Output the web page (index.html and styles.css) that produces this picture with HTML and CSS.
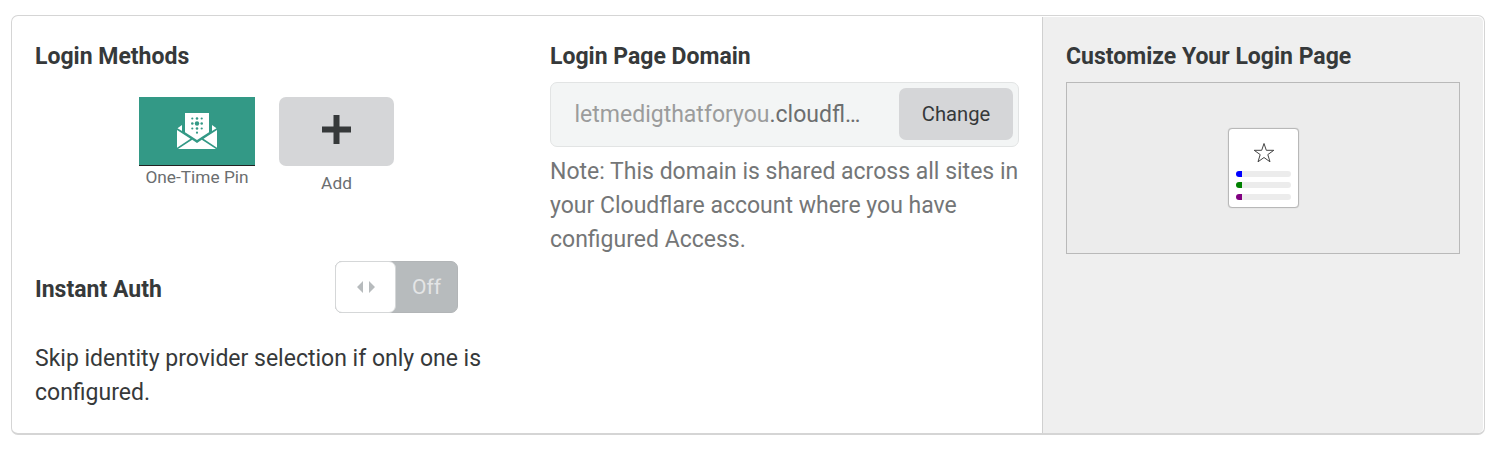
FILE: index.html
```html
<!DOCTYPE html>
<html lang="en">
<head>
<meta charset="utf-8">
<title>Login Methods</title>
<link rel="stylesheet" href="styles.css">
</head>
<body>
<main class="card">
  <section class="methods">
    <h2 class="title">Login Methods</h2>
    <div class="tiles">
      <div class="tile">
        <div class="pin">
          <svg width="40" height="36" viewBox="0 0 40 36" fill="#fff">
            <path d="M8 0h24v19.300L20 27 8 19.300z"/>
            <path d="M5 12v6L.5 15.200zM35 12v6l4.500-2.800z"/>
            <path d="M0 17 13.500 25.800 0 34.800zM40 17 26.500 25.800 40 34.800z"/>
            <path d="M1 36 15.200 26.800 20 29.900 24.800 26.800 39 36z"/>
            <g fill="#339986">
              <circle cx="15.300" cy="5.500" r="1.100"/><circle cx="20" cy="5.500" r="1.300"/><circle cx="24.700" cy="5.500" r="1.100"/>
              <circle cx="15.300" cy="10.500" r="1.300"/><circle cx="20" cy="10.500" r="2.200"/><circle cx="24.700" cy="10.500" r="1.300"/>
              <circle cx="15.300" cy="15.500" r="1.100"/><circle cx="20" cy="15.500" r="1.300"/><circle cx="24.700" cy="15.500" r="1.100"/>
              <circle cx="20" cy="19.700" r="1.100"/>
            </g>
          </svg>
        </div>
        <span class="label">One-Time Pin</span>
      </div>
      <div class="tile">
        <div class="add">
          <svg width="29" height="29" viewBox="0 0 29 29"><path fill="#36393a" d="M11.500 0h6v11.500H29v6H17.500V29h-6V17.500H0v-6h11.500z"/></svg>
        </div>
        <span class="label label-add">Add</span>
      </div>
    </div>
    <div class="instant">
      <h2 class="title">Instant Auth</h2>
      <div class="toggle">
        <div class="knob">
          <svg width="18" height="12" viewBox="0 0 18 12" fill="#b7bbbd"><path d="M6 0v12L0 6zM12 0v12l6-6z"/></svg>
        </div>
        <span class="state">Off</span>
      </div>
    </div>
    <p class="hint">Skip identity provider selection if only one is configured.</p>
  </section>
  <section class="domain">
    <h2 class="title">Login Page Domain</h2>
    <div class="field">
      <div class="value"><span class="sub">letmedigthatforyou</span><span class="host">.cloudfl…</span></div>
      <button class="change">Change</button>
    </div>
    <p class="note">Note: This domain is shared across all sites in your Cloudflare account where you have configured Access.</p>
  </section>
  <section class="customize">
    <h2 class="title">Customize Your Login Page</h2>
    <div class="preview">
      <div class="mini">
        <svg class="star" width="22" height="22" viewBox="0 0 22 22" fill="none" stroke="#444" stroke-width="1"><path d="M11 1.500 13.300 8.300H20.800L14.800 12.600 17 19.800 11 15.500 5 19.800 7.200 12.600 1.200 8.300H8.700z"/></svg>
        <div class="bar blue"></div>
        <div class="bar green"></div>
        <div class="bar purple"></div>
      </div>
    </div>
  </section>
</main>
</body>
</html>
```
FILE: styles.css
```css
* { box-sizing: border-box; }
body {
  margin: 0;
  padding: 15px 17px 0 11px;
  background: #fff;
  color: #36393a;
  font: 23px/34px Roboto, sans-serif;
}
.card {
  display: grid;
  grid-template-columns: 514px 516px 1fr;
  width: 1474px;
  height: 420px;
  border: 1px solid #d5d5d5;
  border-bottom-width: 2px;
  border-radius: 7px;
  padding: 1px 1px 0 0;
}
.title { margin: 0; font-size: 23px; line-height: 34px; font-weight: 700; white-space: nowrap; }
.methods { padding: 23px 23px 0; }
.tiles { display: flex; gap: 24px; height: 154px; padding: 23px 0 0 104px; }
.tile { display: flex; flex-direction: column; align-items: center; }
.pin {
  width: 116px; height: 69px; padding: 16px 38px;
  background: #339986; border-bottom: 1px solid #222;
}
.pin svg, .add svg, .knob svg { display: block; }
.add {
  display: flex; justify-content: center;
  width: 115px; height: 69px; padding-top: 17.500px;
  border-radius: 7px; background: #d5d6d8;
}
.label { font-size: 17.300px; line-height: 22px; color: #6b6e70; white-space: nowrap; }
.label-add { margin-top: 6px; }
.instant { display: flex; height: 86px; padding-top: 33px; }
.instant .title { width: 300px; padding-top: 12px; }
.toggle {
  display: flex; width: 123px; height: 52px;
  flex: none; border-radius: 7px; background: #b7bbbd; border: 1px solid #b2b5b7;
}
.knob {
  display: flex; align-items: center; justify-content: center;
  width: 61px; height: 52px; margin: -1px 0 0 -1px;
  border: 1px solid #d5d7d8; border-radius: 7px; background: #fff;
}
.state { flex: 1; text-align: center; font-size: 21px; line-height: 50px; color: #e4e5e6; }
.hint { margin: 28px 0 0; width: 460px; }
.domain { padding: 23px 23px 0 24px; }
.field {
  display: flex; justify-content: space-between;
  width: 469px; height: 65px; margin-top: 8px; padding: 5px 5px 5px 23.500px;
  border: 1px solid #e2e4e4; border-radius: 7px; background: #f3f5f5;
}
.value { line-height: 54px; white-space: nowrap; }
.sub { color: #9b9c9c; }
.host { color: #6c6e6f; }
.change {
  width: 114px; height: 52px; padding: 0; border: 0; border-radius: 7px;
  background: #d5d6d8; color: #36393a; font: 20.200px/52px Roboto, sans-serif;
}
.note { margin: 8px 0 0; width: 475px; color: #747677; }
.customize {
  padding: 23px 23px 0; border-left: 1px solid #d0d0d0;
  border-radius: 0 5px 5px 0; background: #efefef;
}
.preview {
  display: flex; justify-content: center;
  width: 394px; height: 172px; margin-top: 8px; padding: 45px 0 0 1px;
  border: 1px solid #b9b9b9; background: #ececec;
}
.mini {
  display: flex; flex-direction: column; align-items: center;
  width: 71px; height: 80px; padding-top: 13px;
  border: 1px solid #b8b8b8; border-radius: 4px; background: #fff;
  box-shadow: 0 0 1px #b8b8b8;
}
.star { display: block; margin-bottom: 7px; }
.bar { width: 55px; height: 6px; margin-bottom: 5px; border-radius: 3px; }
.green { margin-bottom: 6px; }
.blue { background: linear-gradient(90deg, #00f 6px, #ececec 6px); }
.green { background: linear-gradient(90deg, #008000 6px, #ececec 6px); }
.purple { background: linear-gradient(90deg, #800080 6px, #ececec 6px); }
```
